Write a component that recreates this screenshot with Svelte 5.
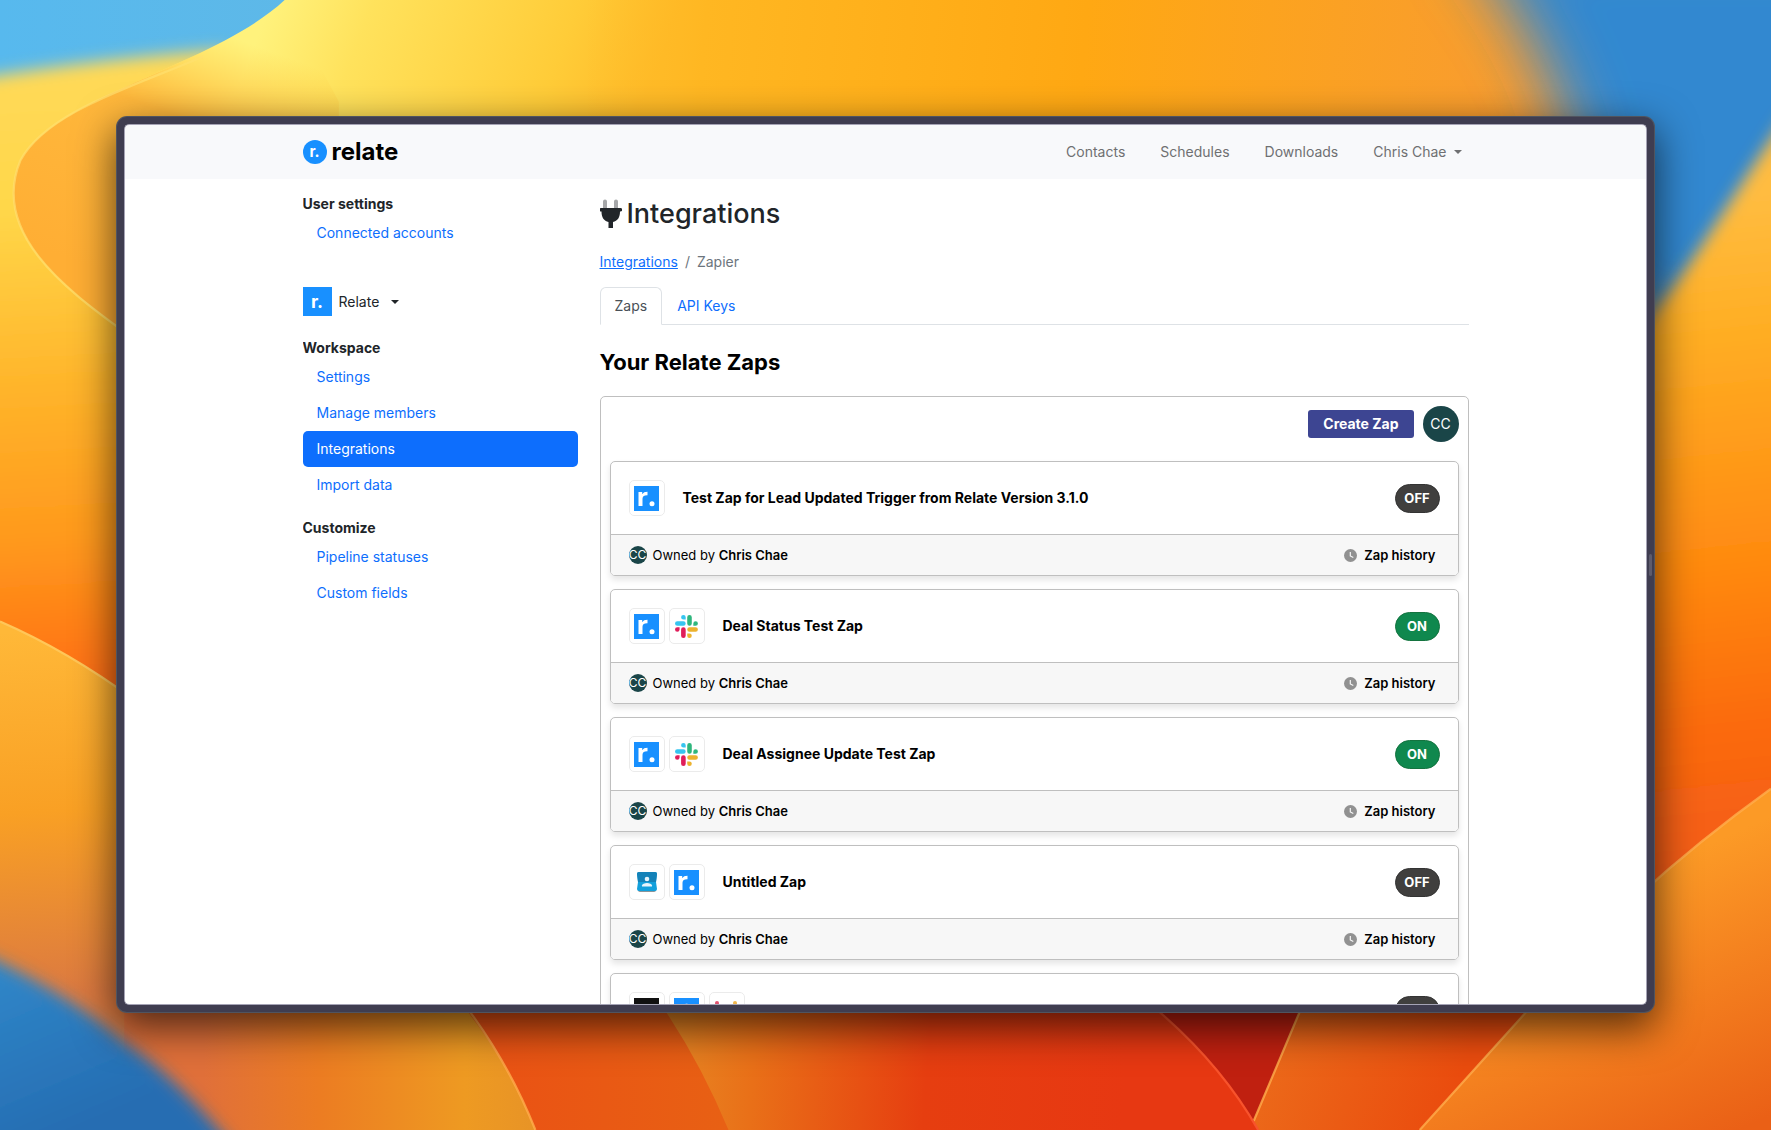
<script>
  const navLinks = ['Contacts', 'Schedules', 'Downloads'];
  const workspaceLinks = ['Settings', 'Manage members', 'Integrations', 'Import data'];
  const customizeLinks = ['Pipeline statuses', 'Custom fields'];
  const zaps = [
    { name: 'Test Zap for Lead Updated Trigger from Relate Version 3.1.0', apps: ['relate'], on: false },
    { name: 'Deal Status Test Zap', apps: ['relate', 'slack'], on: true },
    { name: 'Deal Assignee Update Test Zap', apps: ['relate', 'slack'], on: true },
    { name: 'Untitled Zap', apps: ['contacts', 'relate'], on: false },
    { name: '', apps: ['dark', 'relate', 'dots'], on: false }
  ];
</script>

{#snippet appIcon(kind)}
  <span class="app">
    {#if kind === 'relate'}
      <svg viewBox="0 0 25 25" width="25" height="25" aria-hidden="true">
        <rect width="25" height="25" fill="#1890ff" />
        <path d="M4.500 6h3.700v2.200C9.300 6.500 10.800 5.700 13.500 5.700v3.500c-3-.1-5 .7-5 3.600V20H4.500z" fill="#fff" />
        <circle cx="18" cy="17.700" r="2.500" fill="#fff" />
      </svg>
    {:else if kind === 'slack'}
      <svg viewBox="0 0 54 54" width="23" height="23" aria-hidden="true">
        <path d="M19.700.1a5.400 5.400 0 0 0-5.400 5.400 5.400 5.400 0 0 0 5.400 5.300h5.400V5.500A5.400 5.400 0 0 0 19.700.1m0 14.400H5.400A5.400 5.400 0 0 0 0 19.800a5.400 5.400 0 0 0 5.400 5.400h14.300a5.400 5.400 0 0 0 5.400-5.400 5.400 5.400 0 0 0-5.400-5.300" fill="#36C5F0" />
        <path d="M53.800 19.800a5.400 5.400 0 0 0-5.400-5.300 5.400 5.400 0 0 0-5.400 5.300v5.400h5.400a5.400 5.400 0 0 0 5.400-5.400m-14.400 0V5.500A5.400 5.400 0 0 0 34 .1a5.400 5.400 0 0 0-5.300 5.400v14.300a5.400 5.400 0 0 0 5.300 5.400 5.400 5.400 0 0 0 5.400-5.400" fill="#2EB67D" />
        <path d="M34 54a5.400 5.400 0 0 0 5.400-5.400 5.400 5.400 0 0 0-5.400-5.300h-5.300v5.300A5.400 5.400 0 0 0 34 54m0-14.400h14.400a5.400 5.400 0 0 0 5.400-5.300 5.400 5.400 0 0 0-5.400-5.400H34a5.400 5.400 0 0 0-5.300 5.400 5.400 5.400 0 0 0 5.300 5.300" fill="#ECB22E" />
        <path d="M0 34.300a5.400 5.400 0 0 0 5.400 5.300 5.400 5.400 0 0 0 5.400-5.300v-5.400H5.400A5.400 5.400 0 0 0 0 34.300m14.300 0v14.300a5.400 5.400 0 0 0 5.400 5.400 5.400 5.400 0 0 0 5.400-5.400V34.300a5.400 5.400 0 0 0-5.400-5.400 5.400 5.400 0 0 0-5.400 5.400" fill="#E01E5A" />
      </svg>
    {:else if kind === 'contacts'}
      <svg viewBox="0 0 24 24" width="24" height="24" aria-hidden="true">
        <path d="M3 19h18v1q0 2-2 2H5q-2 0-2-2z" fill="#8b9499" />
        <path d="M2 4q0-2 2-2h16q2 0 2 2l-1 8 1 7q0 2-2 2H4q-2 0-2-2l1-7z" fill="#12a0dc" />
        <path d="M2 4q0-2 2-2h16q2 0 2 2l-1 8H3z" fill="#1482b8" />
        <circle cx="12" cy="9" r="2.300" fill="#e6f4fb" />
        <path d="M7 16.500v-1c0-3.500 10-3.500 10 0v1z" fill="#e6f4fb" />
      </svg>
    {:else if kind === 'dark'}
      <svg viewBox="0 0 25 25" width="25" height="25" aria-hidden="true"><rect width="25" height="25" fill="#111" /></svg>
    {:else}
      <svg viewBox="0 0 25 25" width="25" height="25" aria-hidden="true">
        <circle cx="3" cy="5" r="2" fill="#e2526f" /><circle cx="21" cy="5" r="2" fill="#f0b64a" />
      </svg>
    {/if}
  </span>
{/snippet}

{#snippet sideLinks(items)}
  <ul>
    {#each items as item}
      <li><a href="#{item}" class:active={item === 'Integrations'}>{item}</a></li>
    {/each}
  </ul>
{/snippet}

<div class="desktop">
  <svg class="wallpaper" viewBox="0 0 1568 1000" preserveAspectRatio="none" aria-hidden="true">
    <defs>
      <linearGradient id="sky" x1="0" y1="0" x2="1" y2="0">
        <stop offset="0" stop-color="#57b9ee" /><stop offset="1" stop-color="#62b8e4" />
      </linearGradient>
      <linearGradient id="leftband" gradientUnits="userSpaceOnUse" x1="0" y1="70" x2="30" y2="620">
        <stop offset="0" stop-color="#ffd957" /><stop offset=".2" stop-color="#ffd84a" /><stop offset=".5" stop-color="#ffb42a" /><stop offset=".75" stop-color="#ff981c" /><stop offset="1" stop-color="#ff6a12" />
      </linearGradient>
      <linearGradient id="top" gradientUnits="userSpaceOnUse" x1="240" y1="0" x2="560" y2="120">
        <stop offset="0" stop-color="#fff27c" /><stop offset=".25" stop-color="#ffe25c" /><stop offset=".75" stop-color="#ffcc38" /><stop offset="1" stop-color="#ffba28" />
      </linearGradient>
      <linearGradient id="topright" gradientUnits="userSpaceOnUse" x1="520" y1="0" x2="1400" y2="80">
        <stop offset="0" stop-color="#ffc02c" stop-opacity="0" /><stop offset=".12" stop-color="#ffb722" /><stop offset=".5" stop-color="#ffa813" /><stop offset="1" stop-color="#f79a34" />
      </linearGradient>
      <linearGradient id="lobe" gradientUnits="userSpaceOnUse" x1="170" y1="20" x2="90" y2="240">
        <stop offset="0" stop-color="#ffc93f" stop-opacity="0" /><stop offset=".35" stop-color="#ffb83c" /><stop offset="1" stop-color="#ffae34" />
      </linearGradient>
      <linearGradient id="lowleft" gradientUnits="userSpaceOnUse" x1="0" y1="560" x2="20" y2="880">
        <stop offset="0" stop-color="#ffb838" /><stop offset=".5" stop-color="#f9a024" /><stop offset="1" stop-color="#dc7a40" />
      </linearGradient>
      <linearGradient id="right" gradientUnits="userSpaceOnUse" x1="1480" y1="180" x2="1540" y2="760">
        <stop offset="0" stop-color="#ffbc40" /><stop offset=".2" stop-color="#ffae24" /><stop offset=".55" stop-color="#ff8a10" /><stop offset=".8" stop-color="#fb6a0e" /><stop offset="1" stop-color="#f45c16" />
      </linearGradient>
      <linearGradient id="lowright" gradientUnits="userSpaceOnUse" x1="1440" y1="780" x2="1540" y2="1000">
        <stop offset="0" stop-color="#fc9a26" /><stop offset="1" stop-color="#ea6016" />
      </linearGradient>
      <linearGradient id="strip1" gradientUnits="userSpaceOnUse" x1="180" y1="0" x2="470" y2="0">
        <stop offset="0" stop-color="#e0703a" /><stop offset=".35" stop-color="#ec7c22" /><stop offset=".8" stop-color="#ee9a22" /><stop offset="1" stop-color="#e89426" />
      </linearGradient>
      <linearGradient id="strip2" gradientUnits="userSpaceOnUse" x1="430" y1="0" x2="640" y2="0">
        <stop offset="0" stop-color="#ea5214" /><stop offset="1" stop-color="#e86014" />
      </linearGradient>
      <linearGradient id="strip3" gradientUnits="userSpaceOnUse" x1="620" y1="0" x2="1060" y2="30">
        <stop offset="0" stop-color="#e79028" /><stop offset=".25" stop-color="#e97018" /><stop offset=".6" stop-color="#e63e10" /><stop offset="1" stop-color="#e73812" />
      </linearGradient>
      <linearGradient id="strip4" gradientUnits="userSpaceOnUse" x1="1130" y1="900" x2="1290" y2="960">
        <stop offset="0" stop-color="#ec6a1a" /><stop offset="1" stop-color="#ea4c0e" />
      </linearGradient>
      <linearGradient id="blueleft" gradientUnits="userSpaceOnUse" x1="0" y1="860" x2="60" y2="1000">
        <stop offset="0" stop-color="#2f86c8" /><stop offset="1" stop-color="#266db2" />
      </linearGradient>
      <filter id="soft" x="-30%" y="-30%" width="160%" height="160%"><feGaussianBlur stdDeviation="7" /></filter>
      <filter id="softer" x="-30%" y="-30%" width="160%" height="160%"><feGaussianBlur stdDeviation="28" /></filter>
    </defs>
    <rect width="1568" height="1000" fill="#f08a1e" />
    <rect width="420" height="220" fill="url(#sky)" />
    <path d="M-60 76Q80 52 200 44L260 300 160 660H-60z" fill="url(#leftband)" filter="url(#soft)" />
    <path d="M252 0C190 58 50 84 18 142C-10 205 60 258 120 300H1500V0z" fill="url(#top)" />
    <path d="M252 0C190 58 50 84 18 142C-10 205 60 258 120 300H300V90z" fill="url(#lobe)" />
    <path d="M520 0H1568V300H520z" fill="url(#topright)" />
    <path d="M180 50C120 76 42 98 18 142C-8 205 55 254 112 295" fill="none" stroke="#ffdf6e" stroke-width="2" opacity=".7" />
    <path d="M1290-60C1360 30 1400 90 1420 300L1700 260V-60z" fill="#3088d0" filter="url(#softer)" />
    <path d="M1620 50C1550 140 1500 240 1430 320V1040H1620z" fill="url(#right)" filter="url(#soft)" />
    <path d="M0 550Q60 576 120 620V1000H0z" fill="url(#lowleft)" />
    <path d="M0 550Q60 576 120 620" fill="none" stroke="#ffc658" stroke-width="2" />
    <path d="M110 880H410Q450 930 474 1000H110z" fill="url(#strip1)" />
    <path d="M-60 824Q50 870 110 922 170 962 240 1060H-60z" fill="url(#blueleft)" filter="url(#soft)" />
    <path d="M410 890Q450 940 474 1000H650L590 890z" fill="url(#strip2)" />
    <path d="M586 890Q620 940 645 1000H1114L1160 890z" fill="url(#strip3)" />
    <path d="M1020 890H1155L1110 992Q1070 930 1020 890z" fill="#c02010" />
    <path d="M1153 890H1370L1257 1000H1114L1110 992z" fill="url(#strip4)" />
    <path d="M1568 698Q1440 790 1350 897L1257 1000H1568z" fill="url(#lowright)" />
    <path d="M1568 698Q1440 790 1350 897L1257 1000M412 890Q450 940 474 1000M1153 890L1110 992" fill="none" stroke="#ffae4c" stroke-width="2" opacity=".8" />
    <path d="M1020 890Q1080 940 1114 1000" fill="none" stroke="#f8532c" stroke-width="2" />
  </svg>

  <div class="window">
    <header>
      <div class="container bar">
        <a class="brand" href="#home"><span class="brand-dot">r.</span>relate</a>
        <nav aria-label="Main">
          {#each navLinks as link}<a href="#{link}">{link}</a>{/each}
          <button type="button">Chris Chae<span class="caret"></span></button>
        </nav>
      </div>
    </header>

    <div class="container columns">
      <aside>
        <section>
          <h2>User settings</h2>
          {@render sideLinks(['Connected accounts'])}
        </section>
        <button type="button" class="switcher"><span class="logo">r.</span>Relate<span class="caret"></span></button>
        <section>
          <h2>Workspace</h2>
          {@render sideLinks(workspaceLinks)}
        </section>
        <section>
          <h2>Customize</h2>
          {@render sideLinks(customizeLinks)}
        </section>
      </aside>

      <main>
        <h1>
          <svg viewBox="0 0 22 30" width="22" height="30" aria-hidden="true">
            <path d="M3 9V2.500a2 2 0 0 1 4 0V9zM14 9V2.500a2 2 0 0 1 4 0V9z" fill="#a6a7a9" />
            <path d="M1 9h19.500a1 1 0 0 1 0 3.500H20c0 6-2.500 9.500-7 10.500V29H8.500v-6C4 22 1.500 18.500 1.500 12.500H1A1 1 0 0 1 1 9z" fill="#212529" />
          </svg>
          Integrations
        </h1>
        <nav class="crumbs" aria-label="Breadcrumb"><a href="#integrations">Integrations</a><span>/</span><span>Zapier</span></nav>
        <div class="tabs"><a class="current" href="#zaps">Zaps</a><a href="#keys">API Keys</a></div>
        <h2 class="title">Your Relate Zaps</h2>

        <div class="panel">
          <div class="tools">
            <button type="button" class="create">Create Zap</button>
            <span class="avatar">CC</span>
          </div>
          {#each zaps as zap}
            <article>
              <div class="top">
                <div class="apps">{#each zap.apps as app}{@render appIcon(app)}{/each}</div>
                <h3>{zap.name}</h3>
                <button type="button" class="toggle" class:on={zap.on} aria-pressed={zap.on}>{zap.on ? 'ON' : 'OFF'}</button>
              </div>
              <footer>
                <span class="mini">CC</span>
                <span>Owned by <b>Chris Chae</b></span>
                <a href="#history">
                  <svg viewBox="0 0 13 13" width="13" height="13" aria-hidden="true">
                    <circle cx="6.500" cy="6.500" r="6.500" fill="#919191" />
                    <path d="M6.300 3v4l3 1.500" fill="none" stroke="#f7f7f7" stroke-width="1.200" />
                  </svg>
                  Zap history
                </a>
              </footer>
            </article>
          {/each}
        </div>
      </main>
    </div>
    <span class="grip"></span>
  </div>
</div>

<style>
  :global(body) { margin: 0; }
  * { box-sizing: border-box; }
  .desktop {
    position: relative;
    height: 100vh;
    padding: 117px 117px 118px;
    overflow: hidden;
    font: 14px/22px Inter, sans-serif;
    color: #212529;
  }
  .wallpaper { position: absolute; inset: 0; width: 100%; height: 100%; }
  .window {
    position: relative;
    height: 100%;
    border: 8px solid #3f3d50;
    border-radius: 10px;
    background: #fff;
    box-shadow: 0 0 0 1px #50545f, 0 14px 40px 2px rgba(0, 0, 0, .65);
  }
  .window::after {
    content: '';
    position: absolute;
    inset: -1px;
    border: 1px solid #a5a3b5;
    border-radius: 5px;
    pointer-events: none;
  }
  .grip { position: absolute; right: -6px; top: calc(50% - 11px); width: 3px; height: 22px; border-radius: 2px; background: #5d5b6c; }
  .container { width: calc(100% - 64px); max-width: 1166px; margin: 0 auto; }
  header { background: #f8f9fb; border-radius: 4px 4px 0 0; }
  .bar { display: flex; align-items: center; justify-content: space-between; height: 54px; }
  a { color: #0d6efd; text-decoration: none; }
  button { font: inherit; border: 0; padding: 0; background: none; color: inherit; cursor: pointer; }
  .brand { display: flex; align-items: center; gap: 5px; color: #000; font-weight: 700; font-size: 24px; }
  .brand-dot {
    display: grid; place-items: center; width: 24px; height: 24px; border-radius: 50%;
    background: #1890ff; color: #fff; font-size: 15px; font-weight: 700; line-height: 20px;
  }
  .bar nav { display: flex; gap: 35px; padding-right: 7px; }
  .bar nav a, .bar nav button { color: #6f7072; }
  .caret { display: inline-block; margin-left: 7px; vertical-align: 3px; border: 4px solid transparent; border-top-color: currentColor; border-bottom: 0; }
  .columns { display: flex; gap: 22px; height: calc(100% - 54px); overflow: hidden; }
  aside { width: 275px; flex: none; padding-top: 14px; }
  aside section { margin-bottom: 14px; }
  aside h2 { margin: 0; font-size: 14px; line-height: 22px; font-weight: 700; }
  ul { list-style: none; margin: 0; padding: 0; }
  li a { display: block; padding: 7px 14px; border-radius: 5px; }
  li a.active { background: #0d6efd; color: #fff; }
  .switcher { display: flex; align-items: center; margin: 36px 0 21px; }
  .switcher .caret { margin-left: 12px; }
  .logo { display: grid; place-items: center; width: 29px; height: 29px; margin-right: 7px; background: #1890ff; color: #fff; font-weight: 700; font-size: 18px; }
  main { flex: 1; min-width: 0; padding-top: 17px; }
  h1 { display: flex; align-items: center; gap: 5px; margin: 0; font-size: 27px; line-height: 36px; font-weight: 500; }
  .crumbs { display: flex; gap: 7px; margin: 19px 0 14px; color: #6c757d; }
  .crumbs a { text-decoration: underline; }
  .tabs { display: flex; border-bottom: 1px solid #dee2e6; }
  .tabs a { padding: 7px 14px 6px; border: 1px solid transparent; }
  .tabs .current { margin-bottom: -1px; border-color: #dee2e6 #dee2e6 #fff; border-radius: 6px 6px 0 0; background: #fff; color: #495057; }
  .title { margin: 23px 0 20px; font-size: 22px; line-height: 28px; font-weight: 700; color: #000; }
  .panel { display: flex; flex-direction: column; gap: 13px; padding: 9px; border: 1px solid #bfbfbf; border-radius: 5px; color: #000; }
  .tools { display: flex; align-items: center; justify-content: flex-end; gap: 9px; margin-bottom: 6px; }
  .create { height: 28px; padding: 0 15px; border-radius: 3px; background: #3d4592; color: #fff; font-weight: 700; }
  .avatar, .mini { display: grid; place-items: center; width: 36px; height: 36px; border-radius: 50%; background: #1a4548; color: #fff; }
  article { flex: none; border: 1px solid #bfbfbf; border-radius: 5px; overflow: hidden; box-shadow: 0 4px 6px rgba(0, 0, 0, .1); }
  .top { display: flex; align-items: center; gap: 18px; padding: 18px; }
  .apps { display: flex; gap: 4px; }
  .app { display: grid; place-items: center; width: 36px; height: 36px; border: 1px solid #ebebeb; border-radius: 5px; }
  h3 { flex: 1; margin: 0; font-size: 14px; font-weight: 700; }
  .toggle { width: 45px; height: 29px; border: 1px solid #333; border-radius: 15px; background: #403f3e; color: #fff; font-size: 13px; font-weight: 700; }
  .toggle.on { background: #0f884e; border-color: #14733f; }
  footer { display: flex; align-items: center; gap: 6px; height: 41px; padding: 0 22px 0 18px; border-top: 1px solid #bfbfbf; background: #f7f7f7; font-size: 13px; }
  footer b { font-weight: 600; }
  .mini { width: 18px; height: 18px; font-size: 12px; line-height: 18px; }
  footer a { display: flex; align-items: center; gap: 7px; margin-left: auto; color: #000; font-weight: 600; }
</style>
